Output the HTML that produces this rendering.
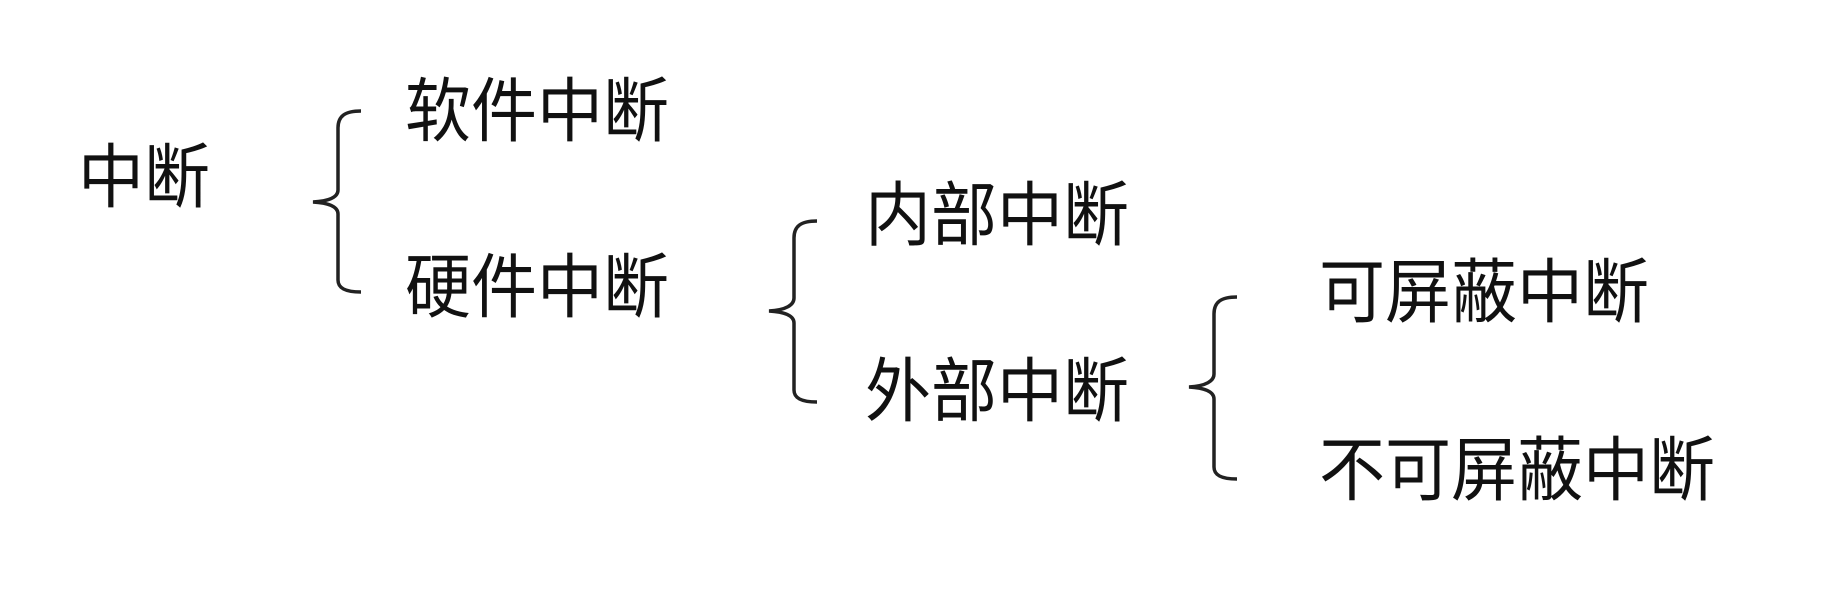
<!DOCTYPE html>
<html><head><meta charset="utf-8"><style>
html,body{margin:0;padding:0;background:#fff;}
body{width:1834px;height:610px;position:relative;overflow:hidden;}
.t{position:absolute;font-family:"Liberation Sans","WenQuanYi Zen Hei","Noto Sans CJK SC",sans-serif;font-size:66px;line-height:66px;color:#111;white-space:nowrap;transform:scaleY(1.06);transform-origin:0 0;}
svg{position:absolute;left:0;top:0;}
</style></head><body>
<div class="t" style="left:78px;top:142px;">中断</div>
<div class="t" style="left:405px;top:76px;">软件中断</div>
<div class="t" style="left:405px;top:252px;">硬件中断</div>
<div class="t" style="left:865px;top:180px;">内部中断</div>
<div class="t" style="left:865px;top:356px;">外部中断</div>
<div class="t" style="left:1319px;top:257px;">可屏蔽中断</div>
<div class="t" style="left:1319px;top:435px;">不可屏蔽中断</div>
<svg width="1834" height="610" fill="none" stroke="#222" stroke-width="3.5">
<path d="M361 111 C345 111 338 116 338 128 L338 190 C338 197 330 201 313 202 C330 203 338 207 338 214 L338 280 C338 288 345 292 361 292"/>
<path d="M817 221 C801 221 794 226 794 238 L794 298 C794 305 786 310 769 311 C786 312 794 316 794 323 L794 390 C794 398 801 402 817 402"/>
<path d="M1237 297 C1221 297 1214 302 1214 314 L1214 374 C1214 381 1206 386 1189 387 C1206 388 1214 392 1214 399 L1214 467 C1214 475 1221 479 1237 479"/>
</svg>
</body></html>
